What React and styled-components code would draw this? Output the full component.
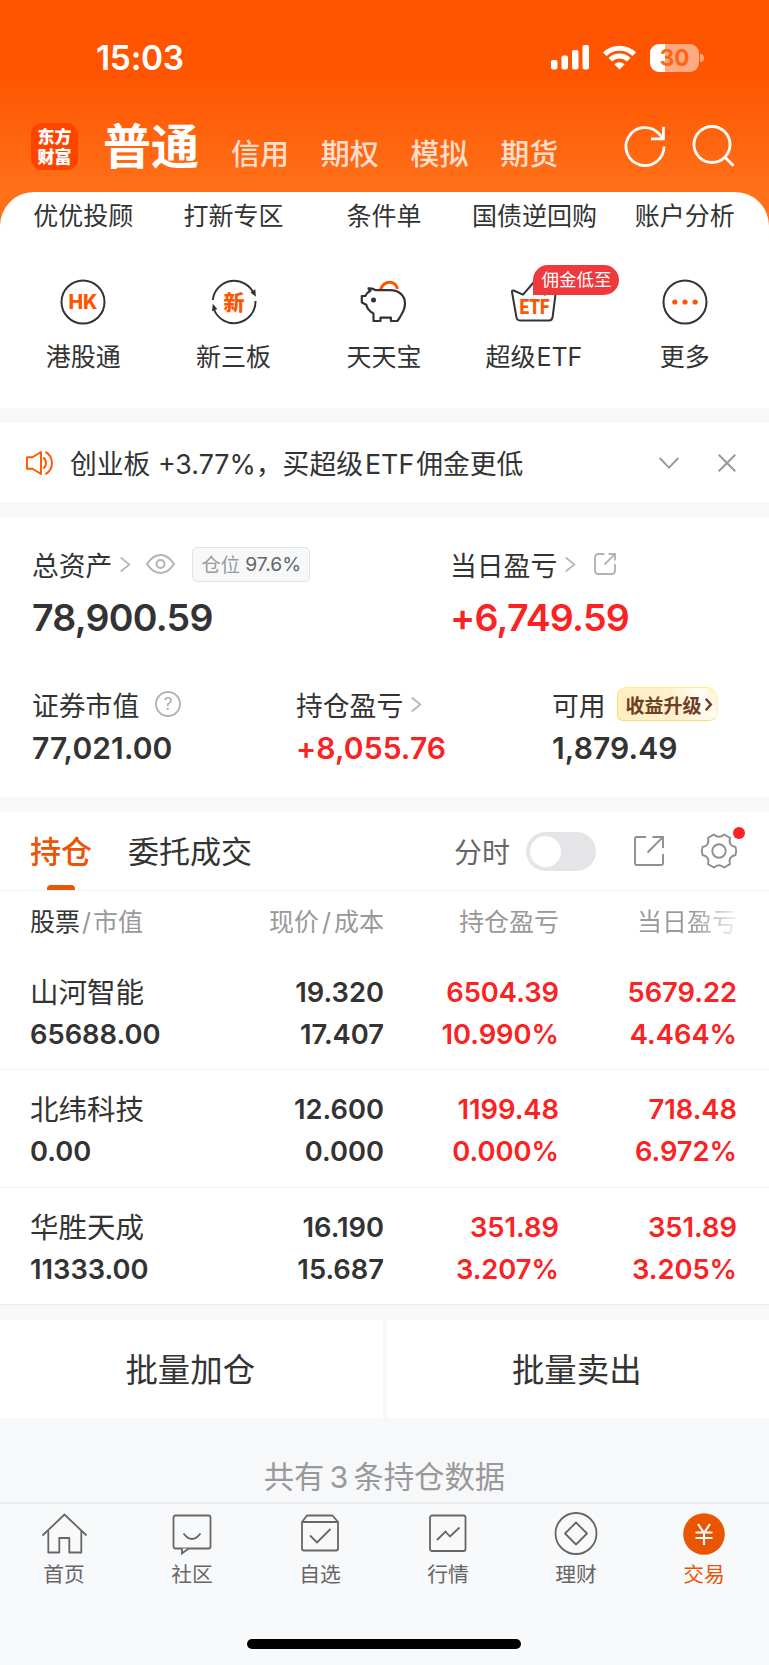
import styled, { createGlobalStyle, css } from "styled-components";
import { useState } from "react";

// Global Styles

const GlobalStyle = createGlobalStyle`
  * {
    box-sizing: border-box;
  }
  body {
    margin: 0;
    background-color: #f7f8fa;
    color: #333;
    font-family: Inter, "Noto Sans CJK SC", sans-serif;
    font-weight: 400;
  }
  svg {
    display: block;
    flex: none;
    overflow: visible;
  }
`;

// Component Styles

const Root = styled.div`
  width: 769px;
  height: 1665px;
  display: flex;
  flex-direction: column;
  overflow: hidden;
  white-space: nowrap;
  background-color: #f7f8fa;
`;

const Top = styled.header`
  background: linear-gradient(#ff5500 0, #ff5500 72px, #ff7019 191px);
`;

const StatusBar = styled.div`
  height: 115px;
  padding: 0 70px 0 96px;
  display: flex;
  align-items: center;
  justify-content: space-between;
  color: white;
`;

const Clock = styled.div`
  font-size: 33.5px;
  font-weight: 600;
  letter-spacing: -0.3px;
`;

const StatusIcons = styled.div`
  display: flex;
  align-items: center;
  gap: 14px;
`;

const Battery = styled.div`
  position: relative;
  width: 49px;
  height: 28px;
  border-radius: 9px;
  background: linear-gradient(90deg, #fff 15px, #ffaa80 15px);
  color: #ff6510;
  font-size: 22.5px;
  font-weight: 700;
  line-height: 28px;
  text-align: center;
  &::after {
    content: "";
    position: absolute;
    right: -5px;
    top: 10px;
    width: 4px;
    height: 8px;
    border-radius: 0 4px 4px 0;
    background-color: #ffaa80;
  }
`;

const AccountBar = styled.div`
  height: 77px;
  padding: 0 35px 0 31px;
  display: flex;
  align-items: flex-start;
  color: white;
`;

const Logo = styled.div`
  width: 47px;
  height: 47px;
  margin: 8px 25px 0 0;
  padding-top: 3px;
  border-radius: 11px;
  background-color: #ff4400;
  font-family: "Noto Sans CJK SC", sans-serif;
  font-size: 17px;
  font-weight: 900;
  line-height: 20px;
  text-align: center;
`;

const ActiveAccount = styled.div`
  font-size: 48px;
  font-weight: 600;
  line-height: 64px;
  margin-right: 32px;
`;

const Account = styled.div`
  font-size: 29px;
  font-weight: 500;
  line-height: 40px;
  margin: 20px 31.7px 0 0;
  color: rgba(255, 255, 255, 0.8);
`;

const AccountIcons = styled.div`
  display: flex;
  gap: 27px;
  margin: 11px 0 0 auto;
`;

const Sheet = styled.section`
  height: 216px;
  padding: 4px 9px 0 8px;
  background-color: white;
  border-radius: 34px 34px 0 0;
  display: grid;
  grid-template-columns: repeat(5, 1fr);
  grid-template-rows: 40px 1fr;
`;

const Shortcut = styled.div`
  font-size: 25px;
  line-height: 40px;
  text-align: center;
`;

const ShortcutIcon = styled.div`
  position: relative;
  width: 48px;
  height: 48px;
  margin: 42px auto 11px;
`;

const Badge = styled.div`
  position: absolute;
  left: 23px;
  top: -13px;
  width: 86px;
  height: 30px;
  border-radius: 15px 15px 15px 0;
  background-color: #ee3a3d;
  color: white;
  font-size: 17.5px;
  line-height: 30px;
  text-align: center;
`;

const Notice = styled.section`
  height: 79px;
  margin: 15px 0;
  padding: 0 33px 0 26px;
  display: flex;
  align-items: center;
  background-color: white;
`;

const NoticeText = styled.div`
  flex: 1;
  margin-left: 16px;
  font-size: 26.8px;
`;

const NoticeActions = styled.div`
  display: flex;
  align-items: center;
  gap: 39px;
`;

const Latin = styled.span`
  margin: 0 ${({ $gap }) => $gap ?? 2}px;
`;

const Assets = styled.section`
  height: 280px;
  padding: 27px 32px 0;
  background-color: white;
`;

const AssetRow = styled.div`
  display: grid;
  grid-template-columns: ${({ $columns }) => $columns};
  ${({ $small }) =>
    $small &&
    css`
      margin-top: 33px;
    `}
`;

const AssetLabel = styled.div`
  height: 40px;
  display: flex;
  align-items: center;
  font-size: 26.8px;
`;

const AssetValue = styled.div`
  font-size: ${({ $small }) => ($small ? 30 : 37.5)}px;
  font-weight: 600;
  line-height: ${({ $small }) => ($small ? 48 : 67)}px;
  letter-spacing: ${({ $small }) => ($small ? 0.1 : -0.75)}px;
  color: ${({ $up }) => ($up ? "#fa2222" : "#333")};
`;

const Space = styled.span`
  width: ${({ $w }) => $w}px;
  flex: none;
`;

const Ratio = styled.div`
  width: 118px;
  height: 35px;
  border: 1px solid #e3e4e6;
  border-radius: 5px;
  background-color: #f7f8fa;
  display: flex;
  align-items: center;
  justify-content: center;
  gap: 5px;
  font-size: 19.3px;
  color: #999;
  b {
    font-weight: 400;
    color: #666;
  }
`;

const Upgrade = styled.div`
  width: 101px;
  height: 34px;
  margin-left: 11px;
  padding-left: 8px;
  border: 1px solid #ffd977;
  border-top-color: #ffec8a;
  border-right-color: #fff0c0;
  border-radius: 9px 12px 9px 6px;
  background: linear-gradient(60deg, #ffeebf, #fff1cc 55%, #fffdf6 85%, #ffefc2);
  display: flex;
  align-items: center;
  gap: 3px;
  color: #6b4024;
  font-size: 19px;
  font-weight: 700;
`;

const Positions = styled.section`
  height: 493px;
  margin-top: 15px;
  background-color: white;
  border-bottom: 1px solid #ebecee;
`;

const Tabs = styled.div`
  height: 79px;
  padding: 0 32px 0 30px;
  border-bottom: 1px solid #f2f3f5;
  display: flex;
  align-items: center;
`;

const Tab = styled.div`
  height: 78px;
  display: flex;
  flex-direction: column;
  align-items: center;
  font-size: 31px;
  line-height: 80px;
  margin-right: 36px;
  ${({ $active }) =>
    $active &&
    css`
      color: #ea5504;
      font-weight: 500;
      &::after {
        content: "";
        width: 28px;
        height: 6px;
        margin-top: -7px;
        border-radius: 4px 4px 0 0;
        background-color: #ea5504;
      }
    `}
`;

const ToggleLabel = styled.div`
  margin: 0 16px 0 auto;
  font-size: 28px;
  color: #666;
`;

const Toggle = styled.button`
  width: 70px;
  height: 39px;
  padding: 4px;
  border: 0;
  border-radius: 20px;
  background-color: ${({ $on }) => ($on ? "#ea5504" : "#e5e5e7")};
  display: flex;
  justify-content: ${({ $on }) => ($on ? "flex-end" : "flex-start")};
  &:hover {
    cursor: pointer;
  }
  &::before {
    content: "";
    width: 31px;
    height: 31px;
    border-radius: 50%;
    background-color: white;
  }
`;

const Gear = styled.div`
  position: relative;
  margin-left: 37px;
  &::after {
    content: "";
    position: absolute;
    right: -8px;
    top: -6px;
    width: 12px;
    height: 12px;
    border-radius: 50%;
    background-color: #fa2222;
  }
`;

const Row = styled.div`
  padding: 0 32px 0 30px;
  display: grid;
  grid-template-columns: 154px 200px 175px 178px;
`;

const HeadRow = styled(Row)`
  height: 61px;
  font-size: 25px;
  line-height: 63px;
  color: #999;
`;

const StockRow = styled(Row)`
  height: 117.3px;
  padding-top: 20px;
  & + & {
    padding-top: 19px;
    border-top: 1px solid #f2f3f5;
  }
`;

const Cell = styled.div`
  text-align: ${({ $left }) => ($left ? "left" : "right")};
  color: ${({ $up }) => ($up ? "#fa2222" : "#333")};
  font-size: 27.3px;
  font-weight: 600;
  line-height: 42px;
`;

const StockName = styled.div`
  font-size: 28.5px;
  font-weight: 400;
`;

const HeadCell = styled.div`
  text-align: right;
  &:first-child {
    text-align: left;
  }
  &:last-child {
    background: linear-gradient(90deg, #999 75%, rgba(153, 153, 153, 0.15));
    background-clip: text;
    color: transparent;
  }
`;

const Strong = styled.span`
  color: #333;
`;

const Batch = styled.div`
  margin-top: 15px;
  display: grid;
  grid-template-columns: 1fr 1fr;
  gap: 4px;
`;

const BatchButton = styled.button`
  height: 98px;
  border: 0;
  background-color: white;
  color: #333;
  font: inherit;
  font-size: 32.4px;
  line-height: 98px;
  padding: 2px 2px 0 0;
`;

const Summary = styled.div`
  height: 84px;
  padding-top: 39px;
  font-size: 30.4px;
  line-height: 40px;
  text-align: center;
  color: #999;
`;

const TabBar = styled.nav`
  flex: 1;
  padding: 9px 1px 0 0;
  border-top: 2px solid #e9eaec;
  background-color: #f8f9fb;
  display: grid;
  grid-template-columns: repeat(6, 1fr);
  align-content: start;
`;

const TabItem = styled.div`
  display: flex;
  flex-direction: column;
  align-items: center;
  font-size: 20.8px;
  line-height: 40px;
  color: ${({ $active }) => ($active ? "#ea5504" : "#666")};
`;

const HomeIndicator = styled.div`
  grid-column: 1 / -1;
  width: 274px;
  height: 10px;
  margin: 44px auto 0;
  border-radius: 5px;
  background-color: black;
`;

// Icons

const SignalIcon = () => (
  <svg width="38" height="25" fill="white">
    <rect x="0" y="15" width="6.5" height="9.5" rx="2" />
    <rect x="10.5" y="10.5" width="6.5" height="14" rx="2" />
    <rect x="21" y="5" width="6.5" height="19.5" rx="2" />
    <rect x="31.5" y="0" width="6.5" height="24.5" rx="2" />
  </svg>
);

const WifiIcon = () => (
  <svg width="33" height="25" fill="none" stroke="white" strokeWidth="5">
    <path d="M1.8 9.2a21 21 0 0 1 29.4 0" />
    <path d="M7.3 14.8a13.2 13.2 0 0 1 18.4 0" />
    <path
      d="M16.5 24.5l-5.2-5.2a7.4 7.4 0 0 1 10.4 0z"
      fill="white"
      stroke="none"
    />
  </svg>
);

const RefreshIcon = () => (
  <svg width="41" height="41" fill="none" stroke="white" strokeWidth="2.8">
    <path d="M39 20.6A19 19 0 1 1 33.5 7.2L38.5 12.6" />
    <path d="M38.4 0.8V12.9H26" />
  </svg>
);

const SearchIcon = () => (
  <svg width="41" height="41" fill="none" stroke="white" strokeWidth="2.8">
    <circle cx="19" cy="18.5" r="18" />
    <path d="M31.5 30.8l9 9" />
  </svg>
);

const Chevron = ({ color = "#b8b8b8" }) => (
  <svg width="10" height="15" fill="none" stroke={color} strokeWidth="1.8">
    <path d="M0.7 0.5l8.6 7-8.6 7" />
  </svg>
);

const HkIcon = () => (
  <svg width="48" height="48">
    <circle cx="24" cy="24" r="21.5" fill="none" stroke="#333" strokeWidth="2" />
    <text
      x="24"
      y="31"
      textAnchor="middle"
      fontSize="19.5"
      fontWeight="800"
      fill="#ff5500"
    >
      HK
    </text>
  </svg>
);

const NewBoardIcon = () => (
  <svg width="48" height="48">
    <g fill="none" stroke="#333" strokeWidth="2">
      <path d="M2.8 22A21.5 21.5 0 0 1 44 16" />
      <path d="M45.5 23A21.5 21.5 0 0 1 4 31.5" />
    </g>
    <path d="M40.5 14.5l4.8-3.2.6 7.5zM7.3 31l-5.3 2.2.8-7.5z" fill="#333" />
    <text
      x="24"
      y="31.5"
      textAnchor="middle"
      fontSize="21"
      fontWeight="900"
      fill="#ff5500"
    >
      新
    </text>
  </svg>
);

const PiggyIcon = () => (
  <svg width="48" height="48" fill="none" stroke="#333" strokeWidth="2.2">
    <path d="M20.5 11.3c2-4.8 5-7 9-7s6.8 2.2 8 6.5" stroke="#ff5500" strokeWidth="3" />
    <path
      d="M8.5 10.4c3.5-.4 5.5.6 7 1.8h14.5c9 0 15 5.4 15 13.5 0 7-3.5 10-5.3 14l-2.3 3.3h-6.5v-3.3H20.5v3.3h-7v-7.5c-4-2-6.5-5.5-7.2-8.7l-4.5-2.3v-6.5h3.5c.8-2 2.5-4 5.2-5.3-1.2-.5-2-1.2-2-2.3z"
      strokeLinejoin="round"
    />
    <circle cx="13.5" cy="22" r="2.5" fill="#333" stroke="none" />
  </svg>
);

const EtfIcon = () => (
  <svg width="48" height="48">
    <path
      d="M3.5 12.5l9.5 4.2L24 4l11 12.7 9.5-4.2q1.5 0 1.3 1.5L42.7 38.5q-.5 4-3.7 4H10q-3.2 0-3.7-4L2 14q-.2-1.7 1.5-1.5z"
      fill="none"
      stroke="#333"
      strokeWidth="2"
      strokeLinejoin="round"
    />
    <text
      x="24.5"
      y="35.5"
      textAnchor="middle"
      fontFamily="Roboto"
      fontSize="21"
      fontWeight="900"
      textLength="30"
      lengthAdjust="spacingAndGlyphs"
      fill="#ff5500"
    >
      ETF
    </text>
  </svg>
);

const MoreIcon = () => (
  <svg width="48" height="48">
    <circle cx="24" cy="24" r="21.5" fill="none" stroke="#333" strokeWidth="2" />
    <g fill="#ff5500">
      <circle cx="13.8" cy="24" r="2.6" />
      <circle cx="24" cy="24" r="2.6" />
      <circle cx="34.2" cy="24" r="2.6" />
    </g>
  </svg>
);

const SpeakerIcon = () => (
  <svg width="28" height="26" fill="none" stroke="#ff5500" strokeWidth="1.9">
    <path d="M1 7.2h5.5L15 2v22l-8.5-5.2H1z" strokeLinejoin="round" />
    <path d="M17.3 7.5a7 7 0 0 1 0 11" />
    <path d="M19.5 1.8c8.6 4.8 8.6 17.6 0 22.4" />
  </svg>
);

const DownIcon = () => (
  <svg width="20" height="12" fill="none" stroke="#999" strokeWidth="2">
    <path d="M0.7 1l9.3 9.6L19.3 1" />
  </svg>
);

const CloseIcon = () => (
  <svg width="18" height="18" fill="none" stroke="#999" strokeWidth="2">
    <path d="M0.7 0.7l16.6 16.6M17.3 0.7L0.7 17.3" />
  </svg>
);

const EyeIcon = () => (
  <svg width="29" height="20" fill="none" stroke="#b3b3b3" strokeWidth="2">
    <path d="M1 10Q7 1 14.5 1T28 10q-6 9-13.5 9T1 10z" strokeLinejoin="round" />
    <circle cx="14.5" cy="10" r="4" />
  </svg>
);

const ShareIcon = () => (
  <svg width="22" height="22" fill="none" stroke="#b3b3b3" strokeWidth="1.9">
    <path d="M10.5 1H4.5Q1 1 1 4.5v13Q1 21 4.5 21h13q3.5 0 3.5-3.5V11" />
    <path d="M14.5 1H21v6.5M20.7 1.3L10.5 11.5" />
  </svg>
);

const ExportIcon = () => (
  <svg width="30" height="30" fill="none" stroke="#8f8f8f" strokeWidth="1.9">
    <path d="M12 1H2.5Q1 1 1 2.5v25Q1 29 2.5 29h25q1.5 0 1.5-1.5V18" />
    <path d="M18.5 1H29v11M28.6 1.4L13.5 16.5" />
  </svg>
);

const HelpIcon = () => (
  <svg width="26" height="26">
    <circle cx="13" cy="13" r="12" fill="none" stroke="#b3b3b3" strokeWidth="1.9" />
    <text x="13" y="19" textAnchor="middle" fontSize="17" fill="#aaa">
      ?
    </text>
  </svg>
);

const GearIcon = () => (
  <svg width="36" height="36" fill="none" stroke="#8f8f8f" strokeWidth="1.9">
    <path
      d="M12.8 1.5Q18 6 23.2 1.500L29 4.800C27.500 10.500 30 13 34.500 14Q36 18 34.500 22C30 23 27.500 25.500 29 31.200L23.200 34.500Q18 30 12.800 34.500L7 31.200C8.500 25.500 6 23 1.500 22Q0 18 1.500 14C6 13 8.500 10.500 7 4.800z"
      strokeLinejoin="round"
    />
    <circle cx="18" cy="18" r="6.7" />
  </svg>
);

const TabIcon = ({ children }) => (
  <svg width="46" height="42" fill="none" stroke="#666" strokeWidth="1.8">
    {children}
  </svg>
);

const HomeIcon = () => (
  <TabIcon>
    <path d="M1.5 22.5L23.5 1.5l22 21" />
    <path d="M7.3 18v21.5h11V25h10v14.5h12V18" strokeLinejoin="round" />
  </TabIcon>
);

const CommunityIcon = () => (
  <TabIcon>
    <rect x="4.5" y="2.5" width="37" height="33" rx="2" />
    <path d="M13 35.500v5l6.500-5" fill="#f8f9fb" />
    <path d="M14.5 20.5q8.5 11 17 0" />
  </TabIcon>
);

const WatchIcon = () => (
  <TabIcon>
    <path d="M5 9l5-6.5h25.5l5.500 6.500v26.500q0 2-2 2H7q-2 0-2-2zM5 9h36" strokeLinejoin="round" />
    <path d="M13 22.5l7 7 13.5-13.5" />
  </TabIcon>
);

const MarketIcon = () => (
  <TabIcon>
    <rect x="5" y="2.5" width="35.5" height="35.5" rx="2" />
    <path d="M12 27l8.5-8.5 4.5 5 9.5-9" />
  </TabIcon>
);

const WealthIcon = () => (
  <TabIcon>
    <circle cx="23" cy="20.5" r="20.5" />
    <path d="M23 9.5l11 11-11 11-11-11z" strokeLinejoin="round" />
  </TabIcon>
);

const TradeIcon = () => (
  <TabIcon>
    <circle cx="23" cy="21" r="20.8" fill="#ea5504" stroke="none" />
    <path
      d="M17 11l6 9 6-9M14.5 19.5h17M14.5 25h17M23 20v12"
      stroke="white"
      strokeWidth="2.1"
    />
  </TabIcon>
);

// Data

const accounts = ["信用", "期权", "模拟", "期货"];

const topLinks = ["优优投顾", "打新专区", "条件单", "国债逆回购", "账户分析"];

const stocks = [
  {
    name: "山河智能",
    value: "65688.00",
    price: ["19.320", "17.407"],
    total: ["6504.39", "10.990%"],
    today: ["5679.22", "4.464%"],
  },
  {
    name: "北纬科技",
    value: "0.00",
    price: ["12.600", "0.000"],
    total: ["1199.48", "0.000%"],
    today: ["718.48", "6.972%"],
  },
  {
    name: "华胜天成",
    value: "11333.00",
    price: ["16.190", "15.687"],
    total: ["351.89", "3.207%"],
    today: ["351.89", "3.205%"],
  },
];

const navItems = [
  { label: "首页", icon: <HomeIcon /> },
  { label: "社区", icon: <CommunityIcon /> },
  { label: "自选", icon: <WatchIcon /> },
  { label: "行情", icon: <MarketIcon /> },
  { label: "理财", icon: <WealthIcon /> },
  { label: "交易", icon: <TradeIcon />, active: true },
];

/** Orange header with the account switcher and the shortcut sheet */
function Header() {
  return (
    <Top>
      <StatusBar>
        <Clock>15:03</Clock>
        <StatusIcons>
          <SignalIcon />
          <WifiIcon />
          <Battery>30</Battery>
        </StatusIcons>
      </StatusBar>
      <AccountBar>
        <Logo>
          东方
          <br />
          财富
        </Logo>
        <ActiveAccount>普通</ActiveAccount>
        {accounts.map((item) => (
          <Account key={item}>{item}</Account>
        ))}
        <AccountIcons>
          <RefreshIcon />
          <SearchIcon />
        </AccountIcons>
      </AccountBar>
      <Sheet>
        {topLinks.map((item) => (
          <Shortcut key={item}>{item}</Shortcut>
        ))}
        <Shortcut>
          <ShortcutIcon>
            <HkIcon />
          </ShortcutIcon>
          港股通
        </Shortcut>
        <Shortcut>
          <ShortcutIcon>
            <NewBoardIcon />
          </ShortcutIcon>
          新三板
        </Shortcut>
        <Shortcut>
          <ShortcutIcon>
            <PiggyIcon />
          </ShortcutIcon>
          天天宝
        </Shortcut>
        <Shortcut>
          <ShortcutIcon>
            <EtfIcon />
            <Badge>佣金低至</Badge>
          </ShortcutIcon>
          超级<Latin $gap={1}>ETF</Latin>
        </Shortcut>
        <Shortcut>
          <ShortcutIcon>
            <MoreIcon />
          </ShortcutIcon>
          更多
        </Shortcut>
      </Sheet>
    </Top>
  );
}

/** Account totals */
function AssetSummary() {
  return (
    <Assets>
      <AssetRow $columns="418px 1fr">
        <div>
          <AssetLabel>
            总资产
            <Space $w={8} />
            <Chevron />
            <Space $w={16} />
            <EyeIcon />
            <Space $w={17} />
            <Ratio>
              仓位<b>97.6%</b>
            </Ratio>
          </AssetLabel>
          <AssetValue>78,900.59</AssetValue>
        </div>
        <div>
          <AssetLabel>
            当日盈亏
            <Space $w={8} />
            <Chevron />
            <Space $w={19} />
            <ShareIcon />
          </AssetLabel>
          <AssetValue $up>+6,749.59</AssetValue>
        </div>
      </AssetRow>
      <AssetRow $small $columns="264px 256px 1fr">
        <div>
          <AssetLabel>
            证券市值
            <Space $w={16} />
            <HelpIcon />
          </AssetLabel>
          <AssetValue $small>77,021.00</AssetValue>
        </div>
        <div>
          <AssetLabel>
            持仓盈亏
            <Space $w={8} />
            <Chevron />
          </AssetLabel>
          <AssetValue $small $up>
            +8,055.76
          </AssetValue>
        </div>
        <div>
          <AssetLabel>
            可用
            <Upgrade>
              收益升级
              <svg width="7" height="13" fill="none" stroke="#6b4024" strokeWidth="2.5">
                <path d="M0.8 0.8l5 5.7-5 5.7" />
              </svg>
            </Upgrade>
          </AssetLabel>
          <AssetValue $small>1,879.49</AssetValue>
        </div>
      </AssetRow>
    </Assets>
  );
}

/** Table of held stocks */
function Holdings() {
  const [intraday, setIntraday] = useState(false);

  const toggleHandler = () => {
    setIntraday((prevState) => !prevState);
  };

  return (
    <Positions>
      <Tabs>
        <Tab $active>持仓</Tab>
        <Tab>委托成交</Tab>
        <ToggleLabel>分时</ToggleLabel>
        <Toggle $on={intraday} onClick={toggleHandler} />
        <Space $w={38} />
        <ExportIcon />
        <Gear>
          <GearIcon />
        </Gear>
      </Tabs>
      <HeadRow>
        <HeadCell>
          <Strong>股票</Strong>
          <Latin>/</Latin>市值
        </HeadCell>
        <HeadCell>
          现价<Latin $gap={3}>/</Latin>成本
        </HeadCell>
        <HeadCell>持仓盈亏</HeadCell>
        <HeadCell>当日盈亏</HeadCell>
      </HeadRow>
      {stocks.map((stock) => (
        <StockRow key={stock.name}>
          <Cell $left>
            <StockName>{stock.name}</StockName>
            {stock.value}
          </Cell>
          <Cell>
            <div>{stock.price[0]}</div>
            {stock.price[1]}
          </Cell>
          <Cell $up>
            <div>{stock.total[0]}</div>
            {stock.total[1]}
          </Cell>
          <Cell $up>
            <div>{stock.today[0]}</div>
            {stock.today[1]}
          </Cell>
        </StockRow>
      ))}
    </Positions>
  );
}

function App() {
  return (
    <Root>
      <GlobalStyle />
      <Header />
      <Notice>
        <SpeakerIcon />
        <NoticeText>
          创业板 +3.77%，买超级<Latin>ETF</Latin>佣金更低
        </NoticeText>
        <NoticeActions>
          <DownIcon />
          <CloseIcon />
        </NoticeActions>
      </Notice>
      <AssetSummary />
      <Holdings />
      <Batch>
        <BatchButton>批量加仓</BatchButton>
        <BatchButton>批量卖出</BatchButton>
      </Batch>
      <Summary>
        共有<Latin $gap={5}>3</Latin>条持仓数据
      </Summary>
      <TabBar>
        {navItems.map((item) => (
          <TabItem key={item.label} $active={item.active}>
            {item.icon}
            {item.label}
          </TabItem>
        ))}
        <HomeIndicator />
      </TabBar>
    </Root>
  );
}

export default App;
